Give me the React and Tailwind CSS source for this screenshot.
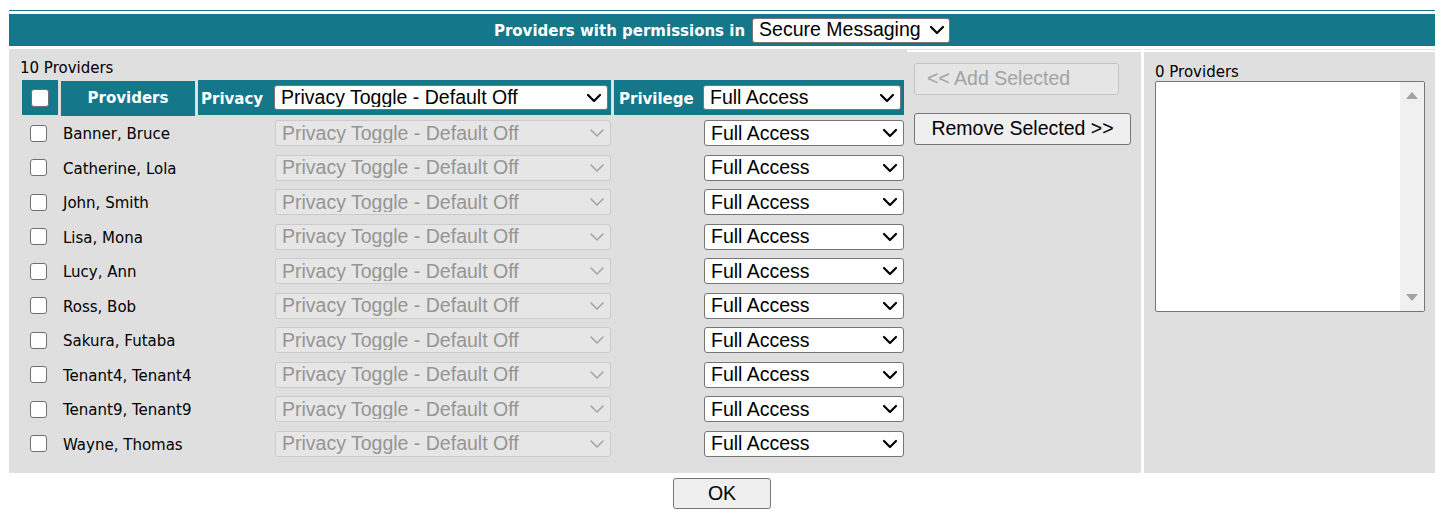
import { ChevronDown } from "lucide-react";

const providers = [
  "Banner, Bruce",
  "Catherine, Lola",
  "John, Smith",
  "Lisa, Mona",
  "Lucy, Ann",
  "Ross, Bob",
  "Sakura, Futaba",
  "Tenant4, Tenant4",
  "Tenant9, Tenant9",
  "Wayne, Thomas",
];

const verdana = "font-['DejaVu_Sans',Verdana,sans-serif]";
const arial = "font-['Liberation_Sans',Arial,sans-serif]";

function Select({ value, width, height = "h-[26px]", disabled, chevron = "right-[2px]" }) {
  return (
    <div className={`relative ${width} ${height}`}>
      <select
        disabled={disabled}
        defaultValue={value}
        className={`${arial} h-full w-full appearance-none rounded-[3px] border pl-[6px] text-[19.5px] leading-none outline-none ${
          disabled
            ? "border-[#cbcbcb] bg-[#e6e6e6] text-[#959595]"
            : "border-[#767676] bg-white text-black"
        }`}
      >
        <option>{value}</option>
      </select>
      <ChevronDown
        strokeWidth={disabled ? 1.6 : 2.2}
        className={`pointer-events-none absolute top-1/2 ${chevron} h-[24px] w-[24px] -translate-y-1/2 ${
          disabled ? "text-[#a5a5a5]" : "text-black"
        }`}
      />
    </div>
  );
}

function Checkbox() {
  return (
    <input
      type="checkbox"
      className="h-[17px] w-[17px] appearance-none rounded-[3px] border-[1.5px] border-[#707070] bg-white"
    />
  );
}

export default function App() {
  return (
    <div className={`h-[515px] w-[1449px] bg-white px-[9px] pt-[10px] ${verdana}`}>
      <div className="w-[1426px]">
        <div className="h-px bg-[#14788a]" />
        <div className="mt-[3px] flex h-[32px] items-center justify-center gap-[7px] bg-[#14788a]">
          <span className="translate-y-px text-[15px] font-bold text-white">Providers with permissions in</span>
          <Select value="Secure Messaging" width="w-[198px]" height="h-[25px]" chevron="right-px" />
        </div>

        <div className="mt-[3px] flex h-[424px]">
          {/* left: providers with permission + buttons */}
          <div className="flex w-[1132px] bg-[#dfdfdf]">
            <div className="w-[898px] pl-[11px] pt-[11px]">
              <div className="text-[15px] leading-[17px] text-black">10 Providers</div>
              <div className="mt-[3px] flex h-[35px] gap-[3px] pl-[2px]">
                <div className="flex w-[36px] items-center justify-center bg-[#14788a]">
                  <input
                    type="checkbox"
                    className="h-[18px] w-[18px] appearance-none rounded-[3px] border-[1.5px] border-[#707070] bg-white"
                  />
                </div>
                <div className="flex w-[134px] translate-y-px items-center justify-center bg-[#14788a] text-[15px] font-bold text-white">
                  Providers
                </div>
                <div className="flex w-[413px] items-center bg-[#14788a] pl-[3px] pr-[3px]">
                  <span className="translate-y-[2px] text-[15px] font-bold text-white">Privacy</span>
                  <div className="ml-auto">
                    <Select value="Privacy Toggle - Default Off" width="w-[334px]" height="h-[25px]" />
                  </div>
                </div>
                <div className="flex w-[290px] items-center bg-[#14788a] pl-[5px] pr-[3px]">
                  <span className="translate-y-[2px] text-[15px] font-bold text-white">Privilege</span>
                  <div className="ml-auto">
                    <Select value="Full Access" width="w-[198px]" height="h-[25px]" />
                  </div>
                </div>
              </div>

              <div className="mt-px flex flex-col pl-[2px]">
                {providers.map((name) => (
                  <div key={name} className="flex h-[34.5px] items-center gap-[3px]">
                    <div className="flex w-[36px] items-center pl-[8px]">
                      <Checkbox />
                    </div>
                    <div className="w-[134px] translate-y-px whitespace-nowrap pl-[2px] text-[15px] text-black">{name}</div>
                    <div className="flex w-[413px] justify-end">
                      <Select value="Privacy Toggle - Default Off" width="w-[336px]" disabled />
                    </div>
                    <div className="flex w-[290px] justify-end">
                      <Select value="Full Access" width="w-[200px]" />
                    </div>
                  </div>
                ))}
              </div>
            </div>

            <div className={`mt-px w-[234px] border-t-2 border-white pl-[7px] pt-[11px] ${arial}`}>
              <button
                disabled
                className="h-[32px] w-[205px] rounded-[3px] border border-[#c4c4c4] bg-[#e5e5e5] pl-[12px] text-left text-[19.5px] text-[#a3a3a3]"
              >
                &lt;&lt; Add Selected
              </button>
              <button className="mt-[18px] h-[32px] w-[217px] rounded-[3px] border border-[#767676] bg-[#efefef] text-[19.5px] text-black">
                Remove Selected &gt;&gt;
              </button>
            </div>
          </div>

          <div className="w-[3px] bg-white" />

          {/* right: providers without permission */}
          <div className="w-[291px] bg-[#dfdfdf]">
            <div className="mt-px h-[2px] bg-white" />
            <div className="pl-[11px] pt-[12px]">
              <div className="text-[15px] leading-[17px] text-black">0 Providers</div>
              <div className="flex h-[231px] w-[270px] justify-end overflow-hidden rounded-[2px] border border-[#767676] bg-white">
                <div className="flex w-[24px] flex-col items-center justify-between bg-[#f0f0f0] py-[10px]">
                  <svg width="12" height="7" viewBox="0 0 12 7">
                    <path d="M0 7 L6 0 L12 7 Z" fill="#a3a3a3" />
                  </svg>
                  <svg width="12" height="7" viewBox="0 0 12 7">
                    <path d="M0 0 L6 7 L12 0 Z" fill="#a3a3a3" />
                  </svg>
                </div>
              </div>
            </div>
          </div>
        </div>

        <div className="mt-[5px] flex justify-center">
          <button className={`${arial} h-[31px] w-[98px] rounded-[3px] border border-[#767676] bg-[#efefef] text-[19.5px] text-black`}>
            OK
          </button>
        </div>
      </div>
    </div>
  );
}
